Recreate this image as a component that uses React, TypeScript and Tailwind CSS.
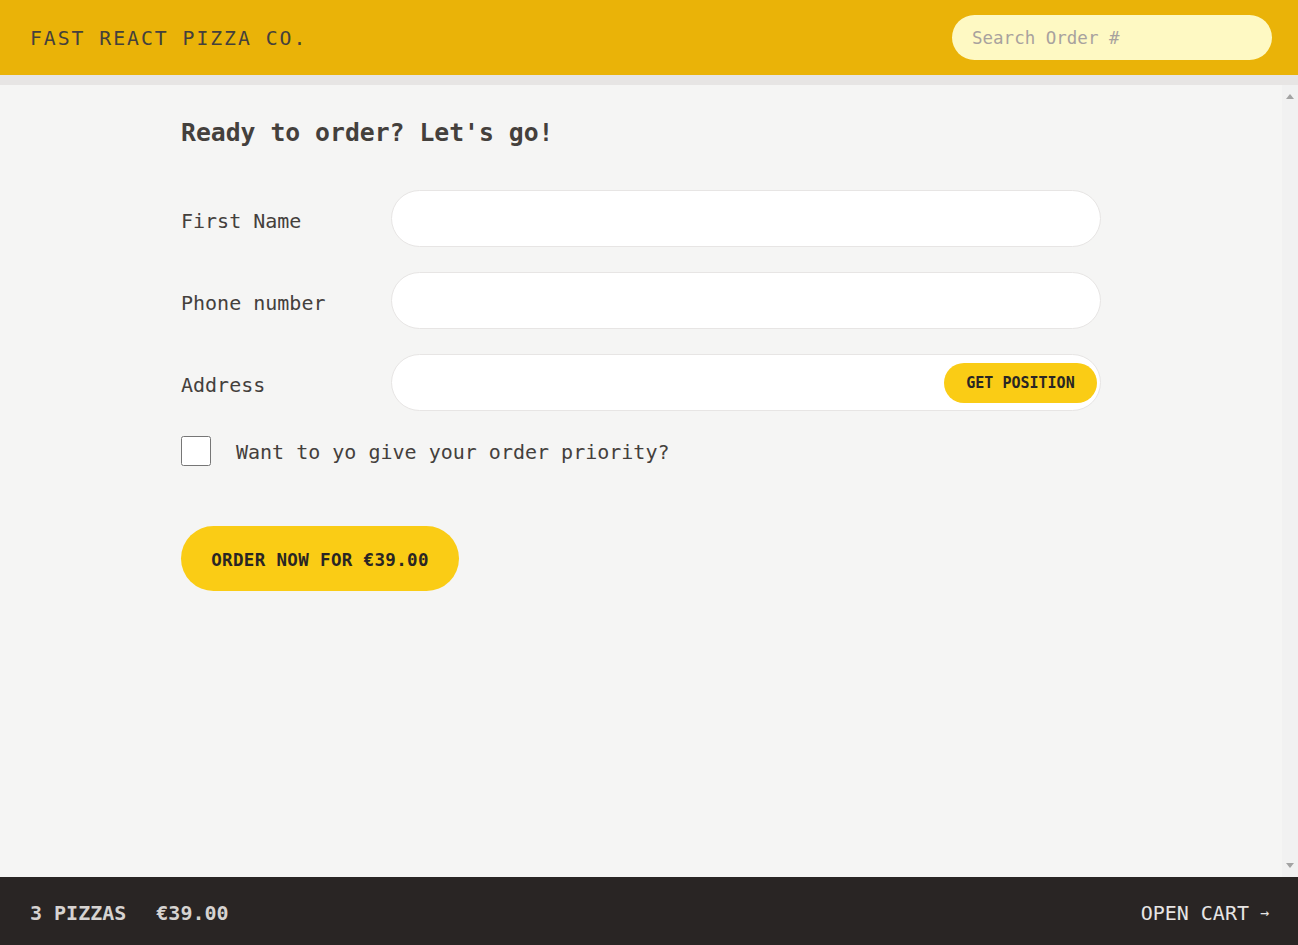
import React from 'react';

const mono = "font-['DejaVu_Sans_Mono','Liberation_Mono',monospace]";

const Header: React.FC = () => (
  <header className="flex h-[85px] items-center justify-between border-b-[10px] border-[#e7e5e4] bg-[#eab308] pr-[26px] pl-[30px] uppercase">
    <a href="#" className="pt-[2px] text-[19.75px] leading-[30px] tracking-[0.1em] text-[#44403c]">
      Fast React Pizza Co.
    </a>
    <input
      placeholder="Search Order #"
      className="h-[45px] w-[320px] rounded-full bg-[#fef9c3] px-5 text-[17.5px] text-[#44403c] placeholder:text-[#a8a29e] focus:outline-none"
    />
  </header>
);

const inputClass =
  'h-[57px] w-full rounded-full border border-[#e7e5e4] bg-white px-[30px] text-[17.5px] focus:outline-none';

const Row: React.FC<{ label: string; children: React.ReactNode }> = ({ label, children }) => (
  <div className="mb-[25px] flex items-center gap-[10px]">
    <label className="w-[200px] shrink-0 pt-[4px] text-[20px] leading-[30px]">{label}</label>
    <div className="relative flex grow items-center">{children}</div>
  </div>
);

const CreateOrder: React.FC = () => (
  <div className="px-5 py-[30px]">
    <h2 className="mb-10 text-[24.75px] leading-[35px] font-bold">Ready to order? Let's go!</h2>
    <form onSubmit={(e) => e.preventDefault()}>
      <Row label="First Name">
        <input type="text" className={inputClass} />
      </Row>
      <Row label="Phone number">
        <input type="tel" className={inputClass} />
      </Row>
      <Row label="Address">
        <input type="text" className={inputClass} />
        <button
          type="button"
          className="absolute right-[4px] h-[40px] w-[153px] rounded-full bg-[#facc15] pt-[2px] text-[15px] font-bold text-[#292524] uppercase"
        >
          Get Position
        </button>
      </Row>
      <div className="mb-[60px] flex h-[30px] items-center gap-[25px]">
        <input type="checkbox" id="priority" className="h-[30px] w-[30px] accent-[#facc15]" />
        <label htmlFor="priority" className="pt-[2px] text-[20px] leading-[28px]">
          Want to yo give your order priority?
        </label>
      </div>
      <button
        type="submit"
        className="w-[278px] rounded-full bg-[#facc15] pt-[22px] pb-[18px] text-[17.5px] leading-[25px] font-bold tracking-[0.02em] text-[#292524] uppercase"
      >
        Order now for €39.00
      </button>
    </form>
  </div>
);

const ScrollTrack: React.FC = () => (
  <div className="flex w-4 shrink-0 flex-col items-center justify-between bg-[#f1f1f1] py-[9px]">
    <svg width="8" height="5" viewBox="0 0 8 5" aria-hidden>
      <path d="M4 0 L8 5 L0 5 Z" fill="#a3a3a3" />
    </svg>
    <svg width="8" height="5" viewBox="0 0 8 5" aria-hidden>
      <path d="M0 0 L8 0 L4 5 Z" fill="#a3a3a3" />
    </svg>
  </div>
);

const CartOverview: React.FC = () => (
  <footer className="flex h-[68px] items-center justify-between bg-[#292524] pt-[4px] pr-[26px] pl-[30px] text-[20px] text-[#e7e5e4] uppercase">
    <p className="flex gap-[30px] font-bold text-[#d6d3d1]">
      <span>3 pizzas</span>
      <span>€39.00</span>
    </p>
    <a href="#" className="flex items-center gap-[11px]">
      Open cart <span className="w-[12px] text-[15px]">&rarr;</span>
    </a>
  </footer>
);

export default function App() {
  return (
    <div className={`grid h-screen grid-rows-[auto_1fr_auto] text-[#44403c] ${mono}`}>
      <Header />
      <div className="flex min-h-0 bg-[#f5f5f4]">
        <div className="grow overflow-y-auto">
          <main className="mx-auto max-w-[960px]">
            <CreateOrder />
          </main>
        </div>
        <ScrollTrack />
      </div>
      <CartOverview />
    </div>
  );
}
